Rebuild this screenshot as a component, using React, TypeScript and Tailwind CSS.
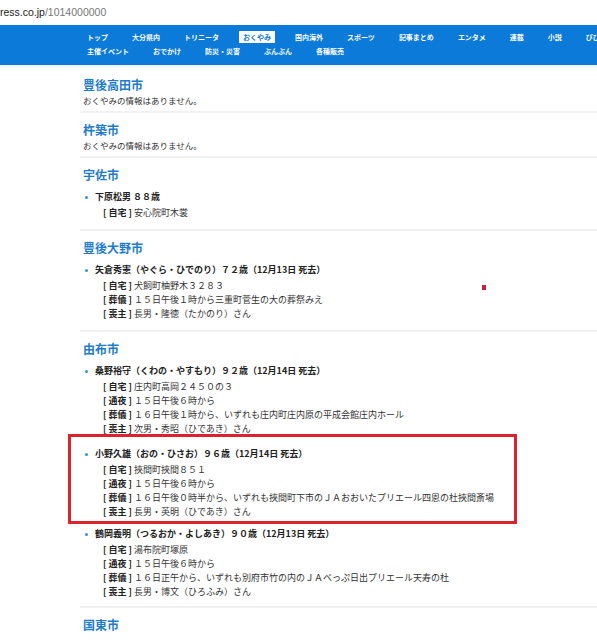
import React from 'react';

type Detail = { label: string; value: string };
type Person = { name: string; details: Detail[]; marked?: boolean };
type City = { name: string; people: Person[]; noInfo?: boolean };

const navTop = ['トップ', '大分県内', 'トリニータ', 'おくやみ', '国内海外', 'スポーツ', '記事まとめ', 'エンタメ', '連載', '小説', 'ぴぴっと'];
const navBottom = ['主催イベント', 'おでかけ', '防災・災害', 'ぶんぶん', '各種販売'];

const cities: City[] = [
  { name: '豊後高田市', people: [], noInfo: true },
  { name: '杵築市', people: [], noInfo: true },
  {
    name: '宇佐市',
    people: [{ name: '下原松男 ８８歳', details: [{ label: '自宅', value: '安心院町木裳' }] }],
  },
  {
    name: '豊後大野市',
    people: [
      {
        name: '矢倉秀憲（やぐら・ひでのり）７２歳（12月13日 死去）',
        details: [
          { label: '自宅', value: '犬飼町柚野木３２８３' },
          { label: '葬儀', value: '１５日午後１時から三重町菅生の大の葬祭みえ' },
          { label: '喪主', value: '長男・隆徳（たかのり）さん' },
        ],
      },
    ],
  },
  {
    name: '由布市',
    people: [
      {
        name: '桑野裕守（くわの・やすもり）９２歳（12月14日 死去）',
        details: [
          { label: '自宅', value: '庄内町高岡２４５０の３' },
          { label: '通夜', value: '１５日午後６時から' },
          { label: '葬儀', value: '１６日午後１時から、いずれも庄内町庄内原の平成会館庄内ホール' },
          { label: '喪主', value: '次男・秀昭（ひであき）さん' },
        ],
      },
      {
        name: '小野久雄（おの・ひさお）９６歳（12月14日 死去）',
        marked: true,
        details: [
          { label: '自宅', value: '挾間町挾間８５１' },
          { label: '通夜', value: '１５日午後６時から' },
          { label: '葬儀', value: '１６日午後０時半から、いずれも挾間町下市のＪＡおおいたプリエール四恩の杜挾間斎場' },
          { label: '喪主', value: '長男・英明（ひであき）さん' },
        ],
      },
      {
        name: '鶴岡義明（つるおか・よしあき）９０歳（12月13日 死去）',
        details: [
          { label: '自宅', value: '湯布院町塚原' },
          { label: '通夜', value: '１５日午後６時から' },
          { label: '葬儀', value: '１６日正午から、いずれも別府市竹の内のＪＡべっぷ日出プリエール天寿の杜' },
          { label: '喪主', value: '長男・博文（ひろふみ）さん' },
        ],
      },
    ],
  },
  { name: '国東市', people: [] },
];

const font = { fontFamily: '"Noto Sans CJK JP", "Noto Sans", sans-serif' };

function NavRow({ items }: { items: string[] }) {
  return (
    <div className="flex whitespace-nowrap leading-[12px]">
      {items.map((item) => (
        <span
          key={item}
          className={`mx-[8px] px-[4px] text-[7px] font-bold ${
            item === 'おくやみ' ? 'bg-white text-[#0b7ad8]' : 'text-white'
          }`}
        >
          {item}
        </span>
      ))}
    </div>
  );
}

function PersonItem({ person }: { person: Person }) {
  const body = (
    <div>
      <div className="flex items-center h-[14px] mb-[2px]">
        <span className="w-[3px] h-[3px] rounded-full bg-[#3a8fd8] ml-[5px] mr-[7px] shrink-0" />
        <span className="font-bold text-[9px] text-[#222]">{person.name}</span>
      </div>
      {person.details.map((d) => (
        <div key={d.label} className="pl-[23px] h-[14px] leading-[14px] text-[9px] text-[#333] whitespace-nowrap">
          <span className="font-bold text-[#222]">[ {d.label} ]</span> {d.value}
        </div>
      ))}
    </div>
  );

  if (person.marked) {
    // hand-drawn annotation box around this entry
    return (
      <div className="-mt-[2px] -ml-[12px] w-[449px] border-[3px] border-[#d9232e] pl-[9px] pt-[10px] pb-[2px]">
        {body}
      </div>
    );
  }
  return body;
}

export default function App() {
  return (
    <div className="relative w-[597px] h-[640px] overflow-hidden bg-white" style={font}>
      {/* address bar */}
      <div className="h-[25px] flex items-center text-[10.5px]" style={{ fontFamily: '"Liberation Sans", Arial, sans-serif' }}>
        <span className="text-[#222]">ress.co.jp</span>
        <span className="text-[#777]">/1014000000</span>
      </div>

      {/* nav */}
      <div className="h-[40px] bg-[#0b7ad8] pl-[75px] pt-[6px] flex flex-col gap-[2px] overflow-hidden">
        <NavRow items={navTop} />
        <NavRow items={navBottom} />
      </div>
      <div className="h-[2px] bg-[#eef2f6]" />

      <div className="pl-[80px] pt-[1px]">
        {cities.map((city, i) => (
          <div
            key={city.name}
            className={`pt-[9px] ${i < cities.length - 1 ? 'border-b-2 border-[#f1f1f1]' : ''} ${
              city.people.length === 0 ? 'pb-[4px]' : city.people.length > 2 ? 'pb-[7px]' : 'pb-[9px]'
            }`}
          >
            <h2 className="pl-[3px] text-[12px] leading-[16px] font-bold text-[#1f7ccb]">{city.name}</h2>
            {city.noInfo && (
              <p className="pl-[3px] text-[8.5px] leading-[14px] text-[#333]">おくやみの情報はありません。</p>
            )}
            {city.people.length > 0 && (
              <div className="mt-[7px] flex flex-col">
                {city.people.map((p, idx) => (
                  <div
                    key={p.name}
                    className={idx === 0 || p.marked ? '' : city.people[idx - 1].marked ? 'mt-[3px]' : 'mt-[9px]'}
                  >
                    <PersonItem person={p} />
                  </div>
                ))}
              </div>
            )}
          </div>
        ))}
      </div>

      {/* stray red mark */}
      <div className="absolute left-[482px] top-[285px] w-[4px] h-[5px] bg-[#c81e3c]" />
    </div>
  );
}
